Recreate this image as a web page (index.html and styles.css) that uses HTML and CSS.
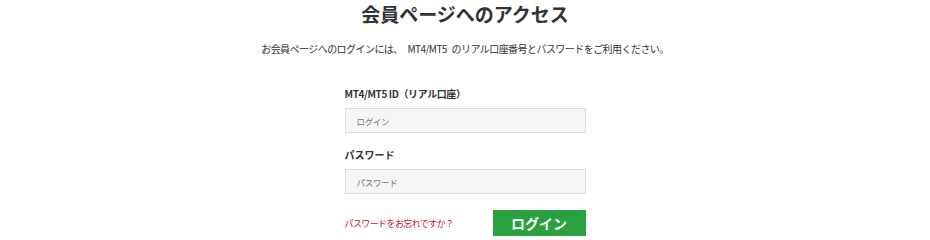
FILE: index.html
```html
<!DOCTYPE html>
<html lang="ja">
  <head>
    <meta charset="UTF-8" />
    <meta name="viewport" content="width=device-width, initial-scale=1.0" />
    <title>会員ページへのアクセス</title>
    <link rel="stylesheet" href="styles.css">
  </head>
  <body>
    <div class="container">
      <h1>会員ページへのアクセス</h1>
      <p class="lead">お会員ページへのログインには、 MT4/MT5 のリアル口座番号とパスワードをご利用ください。</p>

      <form class="login-form">
        <label for="login-id">MT4/MT5 ID（リアル口座）</label>
        <input type="text" id="login-id" placeholder="ログイン" />

        <label for="login-pass">パスワード</label>
        <input type="password" id="login-pass" placeholder="パスワード" />

        <div class="form-footer">
          <a href="#" class="forgot">パスワードをお忘れですか？</a>
          <button type="button" class="btn-login">ログイン</button>
        </div>
      </form>
    </div>
  </body>
</html>
```

FILE: styles.css
```css
body {
  font-family: "Noto Sans CJK JP", "Noto Sans", sans-serif;
  margin: 0;
  background-color: #ffffff;
  color: #333333;
}

.container {
  text-align: center;
}

/* Header */
h1 {
  margin: 0;
  padding-top: 1px;
  font-size: 19px;
  line-height: 26px;
  font-weight: bold;
  color: #333333;
}

.lead {
  margin: 14px 0 0;
  font-size: 10px;
  line-height: 16px;
  letter-spacing: -0.55px;
  word-spacing: 3px;
  color: #333333;
}

/* Form */
.login-form {
  width: 241px;
  margin: 30px auto 0;
  text-align: left;
}

.login-form label {
  display: block;
  font-size: 10px;
  line-height: 14px;
  font-weight: bold;
  margin-bottom: 7px;
}

label[for="login-id"] {
  letter-spacing: -0.4px;
}

.login-form input {
  display: block;
  width: 100%;
  height: 25px;
  padding: 0 11px;
  margin-bottom: 15px;
  border: 1px solid #dddddd;
  background-color: #f6f6f6;
  box-sizing: border-box;
  font-family: inherit;
  font-size: 8.5px;
  letter-spacing: -0.3px;
  color: #555555;
}

.login-form input::placeholder {
  color: #777777;
}

.form-footer {
  display: flex;
  align-items: center;
  justify-content: space-between;
  margin-top: 16px;
}

.forgot {
  font-size: 9px;
  letter-spacing: -0.6px;
  color: #c8102e;
  text-decoration: none;
}

.btn-login {
  width: 93px;
  height: 26px;
  border: none;
  padding: 0;
  background-color: #2aa13f;
  color: #ffffff;
  font-family: inherit;
  font-size: 14px;
  font-weight: bold;
  cursor: pointer;
}
```
